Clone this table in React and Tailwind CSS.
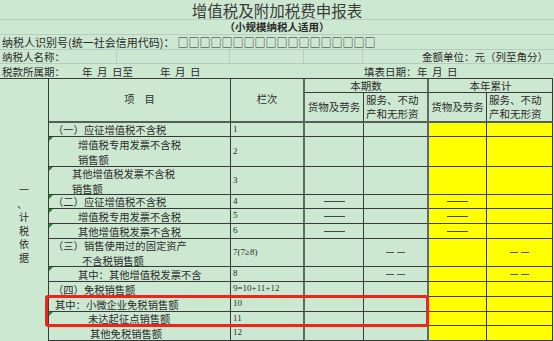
import React from 'react';

const CJK = "font-['Noto_Sans_CJK_SC','Noto_Sans',sans-serif]";
const NUM = "font-['Liberation_Serif',serif]";

const DATA = [
  { lines: [['（一）应征增值税不含税', 'pl-[4px]']], no: '1' },
  { lines: [['增值税专用发票不含税', 'pl-[29px]'], ['销售额', 'pl-[29px]']], no: '2', tri: true },
  { lines: [['其他增值税发票不含税', 'pl-[23px]'], ['销售额', 'pl-[23px]']], no: '3', tri: true },
  { lines: [['（二）应征增值税不含税', 'pl-[4px]']], no: '4', tri: true, dash: true },
  { lines: [['增值税专用发票不含税', 'pl-[29px]']], no: '5', tri: true, dash: true },
  { lines: [['其他增值税发票不含税', 'pl-[29px]']], no: '6', tri: true, dash: true },
  { lines: [['（三）销售使用过的固定资产', 'pl-[4px]'], ['不含税销售额', 'pl-[33px]']], no: '7(7≥8)', dd: true },
  { lines: [['其中：其他增值税发票不含', 'pl-[29px]']], no: '8', tri: true, dd: true },
  { lines: [['（四）免税销售额', 'pl-[4px]']], no: '9=10+11+12' },
  { lines: [['其中：小微企业免税销售额', 'pl-[6px]']], no: '10' },
  { lines: [['未达起征点销售额', 'pl-[39px]']], no: '11', tri: true },
  { lines: [['其他免税销售额', 'pl-[41px]']], no: '12' },
];

function DateParts({ last = '日' }) {
  return (
    <span className="flex">
      <span className="mr-[4.5px]">年</span>
      <span className="mr-[4.5px]">月</span>
      <span>{last}</span>
    </span>
  );
}

function Dash() {
  return <span className="block h-px w-[21px] bg-[#454545]" />;
}

function DoubleDash() {
  return (
    <span className="flex gap-[3px]">
      <span className="block h-px w-[8px] bg-[#555]" />
      <span className="block h-px w-[8px] bg-[#555]" />
    </span>
  );
}

function Cell({ className = '', children }) {
  return (
    <div className={`relative flex items-center overflow-hidden border-r border-b border-[#3a3a3a] ${className}`}>
      {children}
    </div>
  );
}

export default function App() {
  return (
    <div className={`relative h-[341px] w-[554px] overflow-hidden bg-[#cde8d1] text-[#2b2b2b] ${CJK}`}>
      {/* top header lines */}
      <div className="flex h-[20px] items-center justify-center border-b border-[#b5cdbf] text-[15.5px] leading-[20px] text-[#3a3a3a]">
        增值税及附加税费申报表
      </div>
      <div className="flex h-[15px] items-center justify-center border-b border-[#b5cdbf] text-[10.5px] font-bold leading-[14px]">
        （小规模纳税人适用）
      </div>
      <div className="flex h-[15px] items-center whitespace-nowrap border-b border-[#b5cdbf] pl-[2px] text-[11px] leading-[14px]">
        纳税人识别号(统一社会信用代码)：<span className="ml-[3px]">{'□'.repeat(18)}</span>
      </div>
      <div className="flex h-[14px] border-b border-[#b5cdbf] text-[10.5px] leading-[13px]">
        <div className="flex w-[117px] items-center border-r border-[#b5cdbf] pl-[2px]">纳税人名称：</div>
        <div className="w-[113px] border-r border-[#b5cdbf]" />
        <div className="w-[74px] border-r border-[#b5cdbf]" />
        <div className="w-[59px] border-r border-[#b5cdbf]" />
        <div className="flex flex-1 items-center justify-end whitespace-nowrap pr-[6px]">金额单位：元（列至角分）</div>
      </div>
      <div className="flex h-[14px] items-center whitespace-nowrap text-[10.5px] leading-[13px]">
        <div className="w-[82px] pl-[2px]">税款所属期：</div>
        <div className="w-[78px]"><DateParts last="日至" /></div>
        <div className="w-[204px]"><DateParts /></div>
        <div className="w-[53px]">填表日期：</div>
        <div><DateParts /></div>
      </div>

      {/* main table */}
      <div className="flex w-[553px] border-t border-[#3a3a3a]">
        <div className="w-[49px] border-r border-[#3a3a3a] pt-[104px]">
          <div className="flex flex-col items-center text-[10px] leading-[13.5px]">
            <span>一</span>
            <span className="-ml-[4px]">、</span>
            <span>计</span>
            <span>税</span>
            <span>依</span>
            <span>据</span>
          </div>
        </div>
        <div className="grid grid-cols-[182px_74px_59px_65px_58px_66px] grid-rows-[14px_30px_14px_30px_28px_14px_15px_15px_28px_15px_15px_15px_14px_15px] text-[10.3px]">
          <Cell className="row-span-2 justify-center border-b-2 border-b-[#55605a]">
            <span className="mt-[-2px]">项<span className="ml-[10px]">目</span></span>
          </Cell>
          <Cell className="row-span-2 justify-center border-r-2 border-r-[#5f6b64] border-b-2 border-b-[#55605a]">
            <span className="mt-[-2px]">栏次</span>
          </Cell>
          <Cell className="col-span-2 justify-center border-r-2 border-r-[#5f6b64] text-[10.5px]">本期数</Cell>
          <Cell className="col-span-2 justify-center text-[10.5px]">本年累计</Cell>
          <Cell className="justify-center border-b-2 border-b-[#55605a] text-[10.5px]">货物及劳务</Cell>
          <Cell className="items-start border-r-2 border-r-[#5f6b64] border-b-2 border-b-[#55605a] pl-[2px] text-[10.5px] leading-[14px]">
            <span>服务、不动<br />产和无形资<br />产</span>
          </Cell>
          <Cell className="justify-center border-b-2 border-b-[#55605a] text-[10.5px]">货物及劳务</Cell>
          <Cell className="items-start border-b-2 border-b-[#55605a] pl-[2px] text-[10.5px] leading-[14px]">
            <span>服务、不动<br />产和无形资<br />产</span>
          </Cell>

          {DATA.map((r) => (
            <React.Fragment key={r.no}>
              <Cell className="leading-[15px]">
                {r.tri && (
                  <span className="absolute left-0 top-0 h-0 w-0 border-t-[4px] border-r-[4px] border-t-[#1f8a2a] border-r-transparent" />
                )}
                <div className="flex w-full flex-col whitespace-nowrap">
                  {r.lines.map(([t, pl]) => (
                    <span key={t} className={pl}>{t}</span>
                  ))}
                </div>
              </Cell>
              <Cell className={`border-r-2 border-r-[#5f6b64] pl-[2px] text-[9px] whitespace-nowrap ${NUM}`}>{r.no}</Cell>
              <Cell className="justify-center">{r.dash && <Dash />}</Cell>
              <Cell className="justify-center border-r-2 border-r-[#5f6b64]">{r.dd && <DoubleDash />}</Cell>
              <Cell className="justify-center bg-[#ffff00]">{r.dash && <Dash />}</Cell>
              <Cell className="justify-center bg-[#ffff00]">{r.dd && <DoubleDash />}</Cell>
            </React.Fragment>
          ))}
        </div>
      </div>

      {/* red highlight */}
      <div className="absolute left-[45px] top-[295px] h-[32px] w-[384px] rounded-[3px] border-[3px] border-[#f0241b]" />
    </div>
  );
}
